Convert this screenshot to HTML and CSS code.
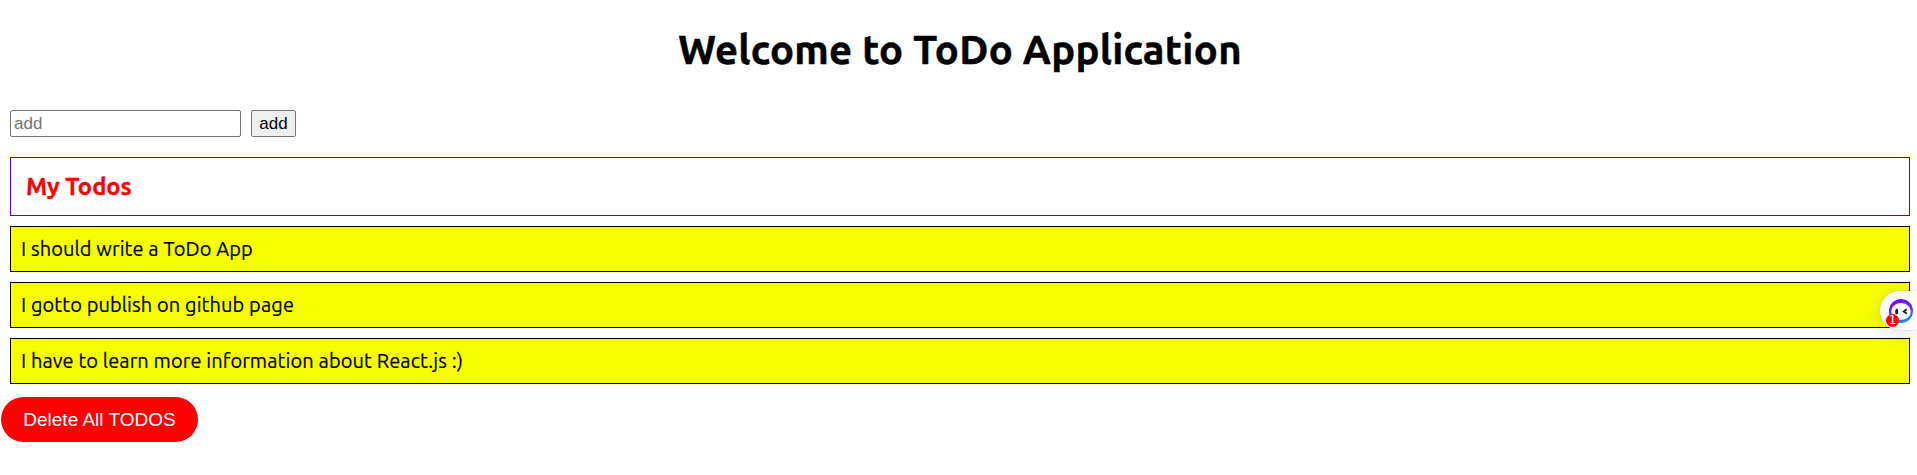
FILE: index.html
```html
<!DOCTYPE html>
<html lang="en">
<head>
<meta charset="utf-8">
<title>ToDo Application</title>
<link rel="stylesheet" href="styles.css">
</head>
<body>
<h1 class="title">Welcome to ToDo Application</h1>
<form class="add-form">
  <input class="add-input" type="text" placeholder="add">
  <button class="add-button" type="button">add</button>
</form>
<h2 class="list-title">My Todos</h2>
<div class="todos">
  <div class="todo">I should write a ToDo App</div>
  <div class="todo">I gotto publish on github page</div>
  <div class="todo">I have to learn more information about React.js :)</div>
</div>
<button class="delete-all" type="button">Delete All TODOS</button>
<div class="assistant">
  <svg class="face" width="24" height="24" viewBox="0 0 24 24">
    <defs>
      <linearGradient id="ring" x1="0.3" y1="0" x2="0.8" y2="1">
        <stop offset="0" stop-color="#7a08f5"/>
        <stop offset="0.5" stop-color="#5a28f5"/>
        <stop offset="1" stop-color="#10a8f0"/>
      </linearGradient>
    </defs>
    <circle cx="12" cy="12" r="12" fill="url(#ring)"/>
    <ellipse cx="12" cy="12.5" rx="9.8" ry="8.5" fill="#fff"/>
    <rect x="6.3" y="9.7" width="2.8" height="5.6" rx="1.2" fill="#222"/>
    <path d="M17.8 10.2 14.8 12.5 17.8 14.8" fill="none" stroke="#222" stroke-width="2"/>
  </svg>
  <span class="badge">1</span>
</div>
</body>
</html>
```
FILE: styles.css
```css
body {
  margin: 0;
  padding: 0 7px 0 10px;
  background: #fff;
  color: #000;
  font-family: Ubuntu, "Noto Sans", sans-serif;
  overflow: hidden;
}
.title {
  margin: 0;
  height: 110px;
  padding-top: 27px;
  box-sizing: border-box;
  text-align: center;
  font-size: 40px;
  line-height: 46px;
  letter-spacing: 0.3px;
  white-space: nowrap;
  -webkit-text-stroke: 0.5px #000;
}
.add-form {
  display: flex;
  gap: 10px;
  margin: 0 0 20px;
}
.add-input, .add-button {
  box-sizing: border-box;
  height: 27px;
  margin: 0;
  border: 1px solid #767676;
  border-radius: 2px;
  font: 17px "Liberation Sans", sans-serif;
}
.add-input {
  width: 231px;
  padding: 0 3px;
}
.add-input::placeholder { color: #757575; }
.add-button {
  width: 45px;
  padding: 0;
  background: #efefef;
  color: #000;
}
.list-title {
  box-sizing: border-box;
  height: 59px;
  margin: 0 0 10px;
  padding: 0 15px;
  border: 1px solid #4d00ff;
  color: #f00;
  font-size: 23.7px;
  line-height: 57px;
  -webkit-text-stroke: 0.3px #f00;
}
.todos {
  display: grid;
  gap: 10px;
}
.todo {
  box-sizing: border-box;
  height: 46px;
  padding: 0 10px;
  border: 1px solid #000;
  background: #f6ff00;
  font-size: 20px;
  line-height: 44px;
  letter-spacing: 0.1px;
  -webkit-text-stroke: 0.2px #000;
}
.delete-all {
  display: block;
  width: 197px;
  height: 45px;
  margin: 13px 0 0 -9px;
  padding: 0;
  border: 0;
  border-radius: 23px;
  background: #f00;
  color: #fff;
  font: 19px "Liberation Sans", sans-serif;
}
.assistant {
  position: absolute;
  top: 291px;
  right: 0;
  width: 37px;
  height: 39px;
  border-radius: 20px 0 0 20px;
  background: #fff;
  box-shadow: 0 3px 22px rgba(0, 0, 0, 0.12), 0 0 1px #aab;
}
.face {
  position: absolute;
  left: 9px;
  top: 8px;
}
.badge {
  position: absolute;
  left: 6px;
  top: 23px;
  width: 13px;
  height: 13px;
  border-radius: 50%;
  background: #f00;
  color: #fff;
  font: 12px/13px "DejaVu Sans", sans-serif;
  text-align: center;
}
```
